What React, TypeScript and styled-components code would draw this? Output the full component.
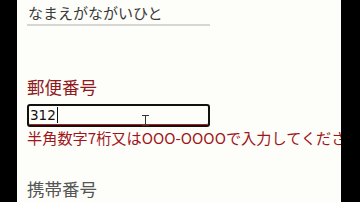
import React from 'react';
import styled, {createGlobalStyle} from 'styled-components';

const GlobalStyle = createGlobalStyle`
    html, body {
        margin: 0;
        padding: 0;
        background: #000;
    }
    * {
        box-sizing: border-box;
    }
`;

const Screen = styled.div`
    display: flex;
    width: 360px;
    height: 202px;
    overflow: hidden;
    background: #000;
`;

const Side = styled.div<{ $w: number }>`
    flex: 0 0 ${p => p.$w}px;
`;

const Page = styled.main`
    flex: 1;
    position: relative;
    overflow: hidden;
    background: #fdfdf9;
    padding-left: 10px;
    font-family: "Noto Sans CJK JP", "Noto Sans", sans-serif;
    white-space: nowrap;
`;

const NameValue = styled.div`
    width: 183px;
    height: 26px;
    padding-left: 1px;
    font-size: 15px;
    line-height: 26px;
    color: #3a3a3a;
    border-bottom: 2px solid #d6d6d2;
`;

const Label = styled.div<{ $color: string; $top: number }>`
    margin-top: ${p => p.$top}px;
    font-size: 17.5px;
    line-height: 22px;
    color: ${p => p.$color};
`;

const InputBox = styled.div`
    position: relative;
    margin-top: 6px;
    width: 183px;
    height: 23px;
    border: 2px solid #111;
    border-radius: 3px;
    box-shadow: inset 0 -1px 0 #b02020;
    padding-left: 1px;
    font-family: "DejaVu Sans", "Noto Sans", sans-serif;
    font-size: 13.5px;
    line-height: 18px;
    color: #111;
`;

const Caret = styled.span`
    display: inline-block;
    width: 1px;
    height: 16px;
    background: #111;
    vertical-align: -3px;
    margin-left: 1px;
`;

const Beam = styled.svg`
    position: absolute;
    left: 112px;
    top: 9px;
`;

const ErrorText = styled.div`
    margin-top: 1px;
    font-size: 15.2px;
    line-height: 19px;
    color: #a0151a;
`;

export default function App() {
    return (
        <>
            <GlobalStyle/>
            <Screen>
                <Side $w={17}/>
                <Page>
                    <NameValue>なまえがながいひと</NameValue>
                    <Label $color="#8e1a1e" $top={50}>郵便番号</Label>
                    <InputBox>
                        312<Caret/>
                        <Beam width="9" height="11" viewBox="0 0 9 11">
                            <path d="M1 0.5h7M4.5 0.5v10M1 10.5h7" stroke="#333" strokeWidth="1" fill="none"/>
                        </Beam>
                    </InputBox>
                    <ErrorText>半角数字7桁又はOOO-OOOOで入力してください</ErrorText>
                    <Label $color="#555" $top={31}>携帯番号</Label>
                </Page>
                <Side $w={19}/>
            </Screen>
        </>
    );
}
